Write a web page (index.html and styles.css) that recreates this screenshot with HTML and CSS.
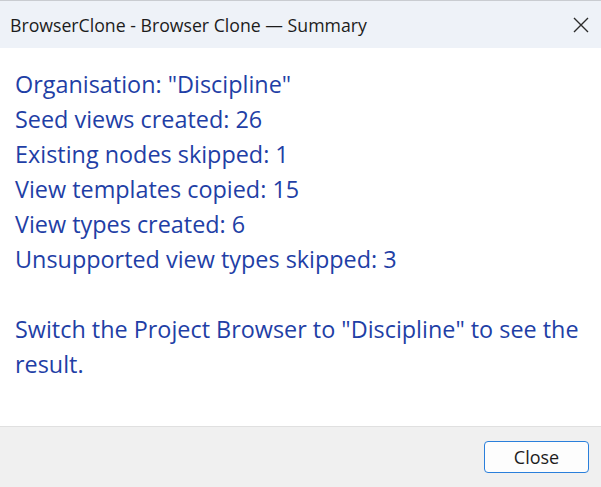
FILE: index.html
```html
<!DOCTYPE html>
<html>
<head>
<meta charset="utf-8">
<link rel="stylesheet" href="styles.css">
</head>
<body>
<div class="window">
  <div class="titlebar">
    <span class="title">BrowserClone - Browser Clone — Summary</span>
    <svg class="close-x" width="16" height="16" viewBox="0 0 16 16"><path d="M1 1L15 15M15 1L1 15" stroke="#2b2b2b" stroke-width="1.4" fill="none"/></svg>
  </div>
  <div class="content">
    <p class="msg">Organisation: "Discipline"<br>Seed views created: 26<br>Existing nodes skipped: 1<br>View templates copied: 15<br>View types created: 6<br>Unsupported view types skipped: 3<br><br>Switch the Project Browser to "Discipline" to see the result.</p>
  </div>
  <div class="footer">
    <button class="btn">Close</button>
  </div>
</div>
</body>
</html>
```
FILE: styles.css
```css
* { box-sizing: border-box; }
html, body { margin: 0; padding: 0; }
body { width: 601px; height: 487px; overflow: hidden; background: #fff; font-family: "Open Sans", "Noto Sans", sans-serif; }
.window { width: 601px; height: 487px; display: flex; flex-direction: column; border-top: 1px solid #c9ccd1; }
.titlebar { height: 47px; background: #eef2f8; display: flex; align-items: center; justify-content: space-between; padding: 0 12px 0 10px; }
.title { font-size: 17.7px; color: #1c1c1c; }
.close-x { display: block; margin-top: 0; }
.content { flex: 1; background: #fff; padding: 19px 15px 0 15px; }
.msg { margin: 0; font-size: 23.4px; line-height: 35px; color: #1f3fa6; }
.footer { height: 61px; background: #f0f0f0; border-top: 1px solid #e0e0e0; display: flex; align-items: center; justify-content: flex-end; padding-right: 12px; }
.btn { width: 105px; height: 32px; background: #fdfdfd; border: 1.5px solid #2a7fdb; border-radius: 4px; font-family: inherit; font-size: 18px; color: #1c1c1c; padding: 0; }
```
